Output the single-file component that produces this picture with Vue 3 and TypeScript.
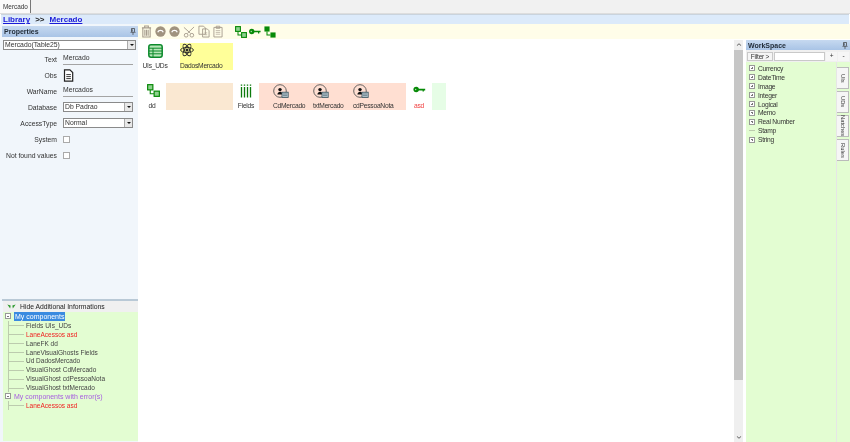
<template>
  <div class="app">
    <svg class="defs" width="0" height="0">
      <defs>
        <symbol id="fk" viewBox="0 0 14 14">
          <rect x="0.7" y="0.7" width="5.6" height="5.6" fill="#8fd18f" stroke="#0a8a0a" stroke-width="1.3" />
          <rect x="7.7" y="7.7" width="5.6" height="5.6" fill="#8fd18f" stroke="#0a8a0a" stroke-width="1.3" />
          <path d="M3.5 6.5V10.5H7.5" fill="none" stroke="#0a8a0a" stroke-width="1.2" />
        </symbol>
        <symbol id="fk-solid" viewBox="0 0 14 14">
          <rect x="0.5" y="0.5" width="6" height="6" fill="#078a07" />
          <rect x="7.5" y="7.5" width="6" height="6" fill="#078a07" />
          <path d="M3.5 6.5V10.5H7.5" fill="none" stroke="#078a07" stroke-width="1.2" />
        </symbol>
        <symbol id="key" viewBox="0 0 14 8">
          <circle cx="3.2" cy="4" r="3.1" fill="#078a07" />
          <path d="M5 3H13.5V5H12V6.2H10.5V5H5Z" fill="#078a07" />
          <circle cx="2.6" cy="4" r="0.8" fill="#b6e0b6" />
        </symbol>
        <symbol id="ghost" viewBox="0 0 16 14">
          <circle cx="7" cy="7" r="6.3" fill="none" stroke="#555" stroke-width="0.9" />
          <circle cx="7" cy="5.6" r="1.7" fill="#111" />
          <path d="M4.4 10.6C4.6 8.8 5.8 7.8 7 7.8S9 8.4 9.4 9.5V10.6Z" fill="#111" />
          <rect x="9" y="8.2" width="6.2" height="5.2" fill="#b9cbd4" stroke="#35505c" stroke-width="0.8" />
          <path d="M10 10H14.2M10 11.7H14.2" stroke="#35505c" stroke-width="0.6" />
        </symbol>
        <symbol id="table" viewBox="0 0 15 14">
          <rect x="0.8" y="0.8" width="13.4" height="12.4" rx="2.2" fill="#b8e6b8" stroke="#0c8a2c" stroke-width="1.5" />
          <path d="M1 4.2H14M1 7H14M1 9.8H14M5 4V13" stroke="#0c8a2c" stroke-width="1" />
        </symbol>
        <symbol id="atom" viewBox="0 0 14 14">
          <g fill="none" stroke="#262626" stroke-width="0.9">
            <ellipse cx="7" cy="7" rx="6.4" ry="2.6" />
            <ellipse cx="7" cy="7" rx="6.4" ry="2.6" transform="rotate(60 7 7)" />
            <ellipse cx="7" cy="7" rx="6.4" ry="2.6" transform="rotate(120 7 7)" />
          </g>
          <circle cx="7" cy="7" r="1.5" fill="#262626" />
        </symbol>
        <symbol id="fields" viewBox="0 0 13 14">
          <path d="M1.5 0.5V1.7M4.5 0.5V1.7M7.5 0.5V1.7M10.5 0.5V1.7" stroke="#0c7a0c" stroke-width="1.4" />
          <path d="M1.5 3V13.5M4.5 3V13.5M7.5 3V13.5M10.5 3V13.5" stroke="#0c7a0c" stroke-width="1.3" />
        </symbol>
      </defs>
    </svg>

    <div class="tabbar">
      <div class="doc-tab">Mercado</div>
    </div>
    <div class="crumbs">
      <a>Library</a><b>&gt;&gt;</b><a>Mercado</a>
    </div>

    <div class="main">
      <aside class="left">
        <div class="props">
          <div class="panel-head">
            <span>Properties</span>
            <svg class="pin" viewBox="0 0 8 9"><path d="M2 0.5H6V4.5L7 5.5H1L2 4.5ZM4 5.5V9M3 1.5V4.5" fill="none" stroke="#333" stroke-width="0.9" /></svg>
          </div>
          <div class="select wide"><span>Mercado(Table25)</span><i class="drop"></i></div>
          <div class="prop"><label>Text</label><div class="val">Mercado</div></div>
          <div class="prop obs">
            <label>Obs</label>
            <svg class="doc" viewBox="0 0 10 13">
              <path d="M1 .8H6.4L9.2 3.6V12.2H1Z" fill="#fff" stroke="#222" stroke-width="1.2" />
              <path d="M2.8 5.6H7.4M2.8 7.6H7.4M2.8 9.6H7.4" stroke="#222" stroke-width="0.9" />
            </svg>
          </div>
          <div class="prop"><label>WarName</label><div class="val">Mercados</div></div>
          <div class="prop"><label>Database</label><div class="select"><span>Db Padrao</span><i class="drop"></i></div></div>
          <div class="prop"><label>AccessType</label><div class="select"><span>Normal</span><i class="drop"></i></div></div>
          <div class="prop"><label>System</label><i class="check"></i></div>
          <div class="prop"><label>Not found values</label><i class="check"></i></div>
        </div>
        <div class="extra">
          <div class="extra-head">
            <svg viewBox="0 0 10 6"><path d="M0 0.5L4 1.8L3.4 5.5ZM10 0.5L6 1.8L6.6 5.5Z" fill="#2f9a2f" /></svg>
            <span>Hide Additional Informations</span>
          </div>
          <div class="extra-tree">
            <div class="root">
              <i class="box minus"></i><span class="selected">My components</span>
            </div>
            <div v-for="item in components" :key="item.label" class="leaf" :class="{ bad: item.bad }">{{ item.label }}</div>
            <div class="root violet">
              <i class="box minus"></i><span>My components with error(s)</span>
            </div>
            <div class="leaf bad">LaneAcessos asd</div>
          </div>
        </div>
      </aside>

      <section class="center">
        <div class="toolbar">
          <svg class="tool trash" viewBox="0 0 12 14"><path d="M1 3H11M4 3V1H8V3M2 3.5V13H10V3.5M4.2 5V11.5M6 5V11.5M7.8 5V11.5" fill="none" stroke="#a69c8e" stroke-width="1.2" /></svg>
          <svg class="tool undo" viewBox="0 0 12 12"><circle cx="6" cy="6" r="5.6" fill="#a0937f" /><path d="M3 6.8A3.2 3.2 0 0 1 9 6.8" fill="none" stroke="#fff" stroke-width="1.4" /></svg>
          <svg class="tool undo" viewBox="0 0 12 12"><circle cx="6" cy="6" r="5.6" fill="#a0937f" /><path d="M3 6.8A3.2 3.2 0 0 1 9 6.8" fill="none" stroke="#fff" stroke-width="1.4" /></svg>
          <svg class="tool cut" viewBox="0 0 13 13"><path d="M1 1.5L8.2 8M12 1L4.8 8" fill="none" stroke="#a69c8e" stroke-width="1" /><circle cx="3.4" cy="10" r="2" fill="none" stroke="#a69c8e" /><circle cx="9.6" cy="10" r="2" fill="none" stroke="#a69c8e" /></svg>
          <svg class="tool copy" viewBox="0 0 13 13"><path d="M1 .7H6L8 2.7V9.5H1ZM5 3.7H10L12 5.7V12.5H5Z" fill="#fffde9" stroke="#a69c8e" /><path d="M7 8H10M7 10H10" stroke="#a69c8e" stroke-width="0.7" /></svg>
          <svg class="tool paste" viewBox="0 0 11 13"><path d="M1 2H10V12.5H1ZM3.5 .7H7.5V3H3.5Z" fill="#fffde9" stroke="#a69c8e" /><path d="M3 5.5H8M3 7.5H8M3 9.5H8" stroke="#a69c8e" stroke-width="0.7" /></svg>
          <svg class="tool green first"><use href="#fk" /></svg>
          <svg class="tool key"><use href="#key" /></svg>
          <svg class="tool green solid"><use href="#fk-solid" /></svg>
        </div>

        <div class="stage">
          <div class="canvas">
            <div class="lane top-lane">
              <div class="cell first-cell">
                <svg class="ic-table"><use href="#table" /></svg>
                <span>UIs_UDs</span>
              </div>
              <div class="block yellow">
                <div class="node">
                  <svg class="ic-atom"><use href="#atom" /></svg>
                  <span>DadosMercado</span>
                </div>
              </div>
            </div>
            <div class="lane">
              <div class="cell dd-cell">
                <svg class="ic-fk"><use href="#fk" /></svg>
                <span>dd</span>
              </div>
              <div class="block tan"></div>
              <div class="cell fields-cell">
                <svg class="ic-fields"><use href="#fields" /></svg>
                <span>Fields</span>
              </div>
              <div class="block pink">
                <div v-for="g in ghosts" :key="g" class="node ghost-node">
                  <svg class="ic-ghost"><use href="#ghost" /></svg>
                  <span>{{ g }}</span>
                </div>
              </div>
              <div class="cell asd-cell">
                <svg class="ic-key"><use href="#key" /></svg>
                <span>asd</span>
              </div>
              <div class="block mint"></div>
            </div>
          </div>
          <div class="vscroll">
            <svg class="arrow" viewBox="0 0 7 4"><path d="M.7 3.5L3.5 1L6.3 3.5" fill="none" stroke="#333" stroke-width="1" /></svg>
            <div class="thumb"></div>
            <svg class="arrow" viewBox="0 0 7 4"><path d="M.7 .5L3.5 3L6.3 .5" fill="none" stroke="#333" stroke-width="1" /></svg>
          </div>
          <aside class="right">
            <div class="panel-head ws-head">
              <span>WorkSpace</span>
              <svg class="pin" viewBox="0 0 8 9"><path d="M2 0.5H6V4.5L7 5.5H1L2 4.5ZM4 5.5V9M3 1.5V4.5" fill="none" stroke="#333" stroke-width="0.9" /></svg>
            </div>
            <div class="filter">
              <div class="filter-btn">Filter &gt;</div>
              <div class="filter-input"></div>
              <div class="mini">+</div>
              <div class="mini">-</div>
            </div>
            <div class="ws-body">
              <div class="ws-tree">
                <div v-for="t in types" :key="t" class="type">
                  <i v-if="t !== 'Stamp'" class="box plus"></i><i v-else class="dash"></i><span>{{ t }}</span>
                </div>
              </div>
              <div class="side-tabs">
                <div v-for="s in sideTabs" :key="s" class="side-tab"><span>{{ s }}</span></div>
              </div>
            </div>
          </aside>
        </div>
      </section>
    </div>
  </div>
</template>

<script setup lang="ts">
const components = [
  { label: "Fields UIs_UDs", bad: false },
  { label: "LaneAcessos asd", bad: true },
  { label: "LaneFK dd", bad: false },
  { label: "LaneVisualGhosts Fields", bad: false },
  { label: "Ud DadosMercado", bad: false },
  { label: "VisualGhost CdMercado", bad: false },
  { label: "VisualGhost cdPessoaNota", bad: false },
  { label: "VisualGhost txtMercado", bad: false },
];
const ghosts = ["CdMercado", "txtMercado", "cdPessoaNota"];
const types = ["Currency", "DateTime", "Image", "Integer", "Logical", "Memo", "Real Number", "Stamp", "String"];
const sideTabs = ["UIs", "UDs", "Natches", "Rules"];
</script>

<style>
html, body { margin: 0; background: #fff; }
</style>

<style scoped>
.app {
  width: 850px;
  height: 442px;
  display: flex;
  flex-direction: column;
  overflow: hidden;
  background: #fff;
  color: #333;
  font: 6.8px/9px "Liberation Sans", Arial, sans-serif;
  filter: blur(0.3px);
}
.defs { position: absolute; }
svg { display: block; flex: none; }

.tabbar {
  height: 14px;
  background: #f1f1f1;
  border-bottom: 1px solid #ddd;
  box-sizing: border-box;
  display: flex;
}
.doc-tab {
  width: 31px;
  padding-left: 3px;
  box-sizing: border-box;
  background: #fafafa;
  border-right: 1px solid #777;
  line-height: 13px;
  font-size: 6.4px;
}
.crumbs {
  height: 10px;
  margin: 0 1px;
  background: #dceafa;
  border-top: 1px solid #c9d3dd;
  box-sizing: border-box;
  display: flex;
  gap: 5px;
  padding-left: 2px;
  font-size: 8px;
  line-height: 9px;
  font-weight: 700;
}
.crumbs a { color: #1a1ad8; text-decoration: underline; }
.crumbs b { color: #222; }

.main { flex: 1; display: flex; min-height: 0; }

.left {
  width: 138px;
  flex: none;
  background: #f1f6fb;
  display: flex;
  flex-direction: column;
  padding-left: 2px;
  box-sizing: border-box;
}
.props { height: 275px; padding-top: 2px; box-sizing: border-box; }
.panel-head {
  height: 11px;
  background: linear-gradient(#c6d9f0, #a9c4e6);
  display: flex;
  align-items: center;
  justify-content: space-between;
  padding: 0 2px;
  font-size: 7px;
  font-weight: 700;
  color: #1f2a36;
}
.pin { width: 6px; height: 7px; }
.select {
  width: 70px;
  height: 10px;
  box-sizing: border-box;
  border: 1px solid #8a8a8a;
  background: #fff;
  display: flex;
  justify-content: space-between;
  align-items: center;
  padding-left: 1px;
  line-height: 8px;
}
.select.wide { width: 133px; margin: 3px 0 1px 1px; height: 10px; }
.drop {
  width: 7px;
  height: 100%;
  background: #e8e8e8;
  border-left: 1px solid #aaa;
  position: relative;
}
.drop::after {
  content: "";
  position: absolute;
  left: 1.5px;
  top: 3px;
  border: 2px solid transparent;
  border-top: 2.5px solid #111;
  border-bottom: 0;
}
.prop {
  display: flex;
  align-items: center;
  gap: 6px;
  height: 16px;
}
.prop label { width: 55px; text-align: right; flex: none; }
.val {
  width: 70px;
  height: 12px;
  padding-top: 1px;
  box-sizing: border-box;
  border-bottom: 1px solid #a4a4a4;
  line-height: 8px;
}
.doc { width: 11px; height: 13px; }
.check {
  width: 5px;
  height: 5px;
  background: #fff;
  border: 1px solid #aaa;
}

.extra { flex: 1; display: flex; flex-direction: column; padding-left: 1px; border-top: 2px solid #b9c9d6; }
.extra-head {
  height: 11px;
  padding-left: 4px;
  background: #f0f0f0;
  display: flex;
  align-items: center;
  gap: 4px;
  color: #222;
}
.extra-head svg { width: 9px; height: 5px; }
.extra-tree {
  flex: 1;
  background: #e3fdd2;
  padding: 0 0 0 2px;
  color: #444;
  margin-bottom: 1px;
}
.root {
  height: 8.9px;
  display: flex;
  align-items: center;
  gap: 3px;
  line-height: 9px;
  font-size: 7px;
}
.selected { background: #3a8ae0; color: #fff; padding: 0 1px; }
.violet { color: #a65ce0; }
.box {
  width: 4px;
  height: 4px;
  flex: none;
  border: 1px solid #999;
  background: #fff;
  position: relative;
}
.box::before {
  content: "";
  position: absolute;
  left: 1px;
  right: 1px;
  top: 1.5px;
  height: 1px;
  background: #777;
}
.plus::after {
  content: "";
  position: absolute;
  top: 1px;
  bottom: 1px;
  left: 1.5px;
  width: 1px;
  background: #777;
}
.leaf {
  height: 8.9px;
  margin-left: 3px;
  padding-left: 17px;
  border-left: 1px solid #bccbae;
  line-height: 9px;
  font-size: 6.5px;
  position: relative;
}
.leaf::before {
  content: "";
  position: absolute;
  left: 0;
  width: 15px;
  top: 4.5px;
  border-top: 1px solid #bccbae;
}
.bad { color: #f02020; }

.center { flex: 1; min-width: 0; display: flex; flex-direction: column; }
.toolbar {
  height: 15px;
  background: #fffde9;
  display: flex;
  align-items: center;
  padding-left: 3px;
  gap: 2px;
}
.tool.trash { width: 11px; height: 13px; }
.tool.undo { width: 11px; height: 11px; margin-left: 1px; }
.tool.cut { width: 12px; height: 12px; margin-left: 1px; }
.tool.copy { width: 12px; height: 13px; margin-left: 1px; }
.tool.paste { width: 10px; height: 13px; margin-left: 1px; }
.tool.green { width: 12px; height: 12px; }
.tool.green.first { margin-left: 10px; }
.tool.green.solid { margin-left: 1px; }
.tool.key { width: 12px; height: 7px; }

.stage { flex: 1; min-height: 0; display: flex; padding-top: 1px; }
.canvas {
  width: 596px;
  flex: none;
  padding-top: 3px;
  box-sizing: border-box;
  font-size: 6.7px;
  letter-spacing: -0.25px;
}
.lane { display: flex; height: 27px; }
.top-lane { margin-bottom: 13px; }
.cell {
  display: flex;
  flex-direction: column;
  align-items: center;
  justify-content: space-between;
  padding: 1px 0 0;
  box-sizing: border-box;
}
.first-cell { width: 34px; margin-right: 8px; }
.dd-cell { width: 28px; }
.fields-cell { width: 26px; }
.asd-cell { width: 26px; color: #f04040; }
.block { height: 27px; box-sizing: border-box; }
.yellow { width: 53px; background: #ffff99; }
.tan { width: 67px; background: #fae8d2; }
.pink { width: 147px; background: #ffdfd2; display: flex; padding-left: 14px; }
.mint { width: 14px; background: #e6fde6; }
.node {
  display: flex;
  flex-direction: column;
  justify-content: space-between;
  align-items: flex-start;
  box-sizing: border-box;
  height: 100%;
  white-space: nowrap;
}
.ghost-node { width: 40px; padding-top: 1px; }
.ic-table { width: 15px; height: 14px; }
.ic-atom { width: 14px; height: 14px; }
.ic-fk { width: 13px; height: 13px; margin-left: 2px; }
.ic-fields { width: 13px; height: 14px; }
.ic-ghost { width: 16px; height: 14px; }
.ic-key { width: 13px; height: 7px; margin-top: 2px; }

.vscroll {
  width: 9px;
  background: #efefef;
  display: flex;
  flex-direction: column;
  align-items: center;
  justify-content: space-between;
  padding: 3px 0;
  box-sizing: border-box;
}
.arrow { width: 6px; height: 3px; }
.thumb { width: 9px; flex: 1; margin: 4px 0 56px; background: #c6c6c6; }

.right {
  flex: 1;
  margin-left: 3px;
  display: flex;
  flex-direction: column;
  background: #f4f4f4;
  min-width: 0;
}
.ws-head { height: 10px; }
.filter {
  height: 12px;
  display: flex;
  align-items: center;
  padding: 0 1px;
  gap: 1px;
  background: #f0f0f0;
  font-size: 6.5px;
  letter-spacing: -0.2px;
}
.filter-btn {
  width: 26px;
  height: 9px;
  text-align: center;
  background: #f6f6f6;
  border: 1px solid #c9c9c9;
  box-sizing: border-box;
  line-height: 7px;
}
.filter-input { width: 51px; height: 9px; background: #fff; border: 1px solid #c9c9c9; box-sizing: border-box; }
.mini { flex: 1; height: 9px; text-align: center; line-height: 8px; background: #f6f6f6; }
.ws-body { flex: 1; display: flex; background: #e3fdd2; min-height: 0; }
.ws-tree {
  width: 90px;
  flex: none;
  padding: 2px 0 0 3px;
  box-sizing: border-box;
  font-size: 6.7px;
  letter-spacing: -0.25px;
}
.type { height: 8.9px; display: flex; align-items: center; gap: 3px; line-height: 9px; }
.dash { width: 6px; border-top: 1px solid #bccbae; flex: none; }
.side-tabs {
  width: 13px;
  flex: none;
  border-left: 1px solid #e6e6e6;
  padding-top: 5px;
  display: flex;
  flex-direction: column;
  gap: 2px;
}
.side-tab {
  width: 12px;
  height: 22px;
  background: #f6f6f6;
  border: 1px solid #bbb;
  border-left: 0;
  box-sizing: border-box;
  display: flex;
  align-items: center;
  justify-content: center;
  font-size: 5.8px;
  white-space: nowrap;
}
.side-tab span { writing-mode: vertical-rl; }
</style>
